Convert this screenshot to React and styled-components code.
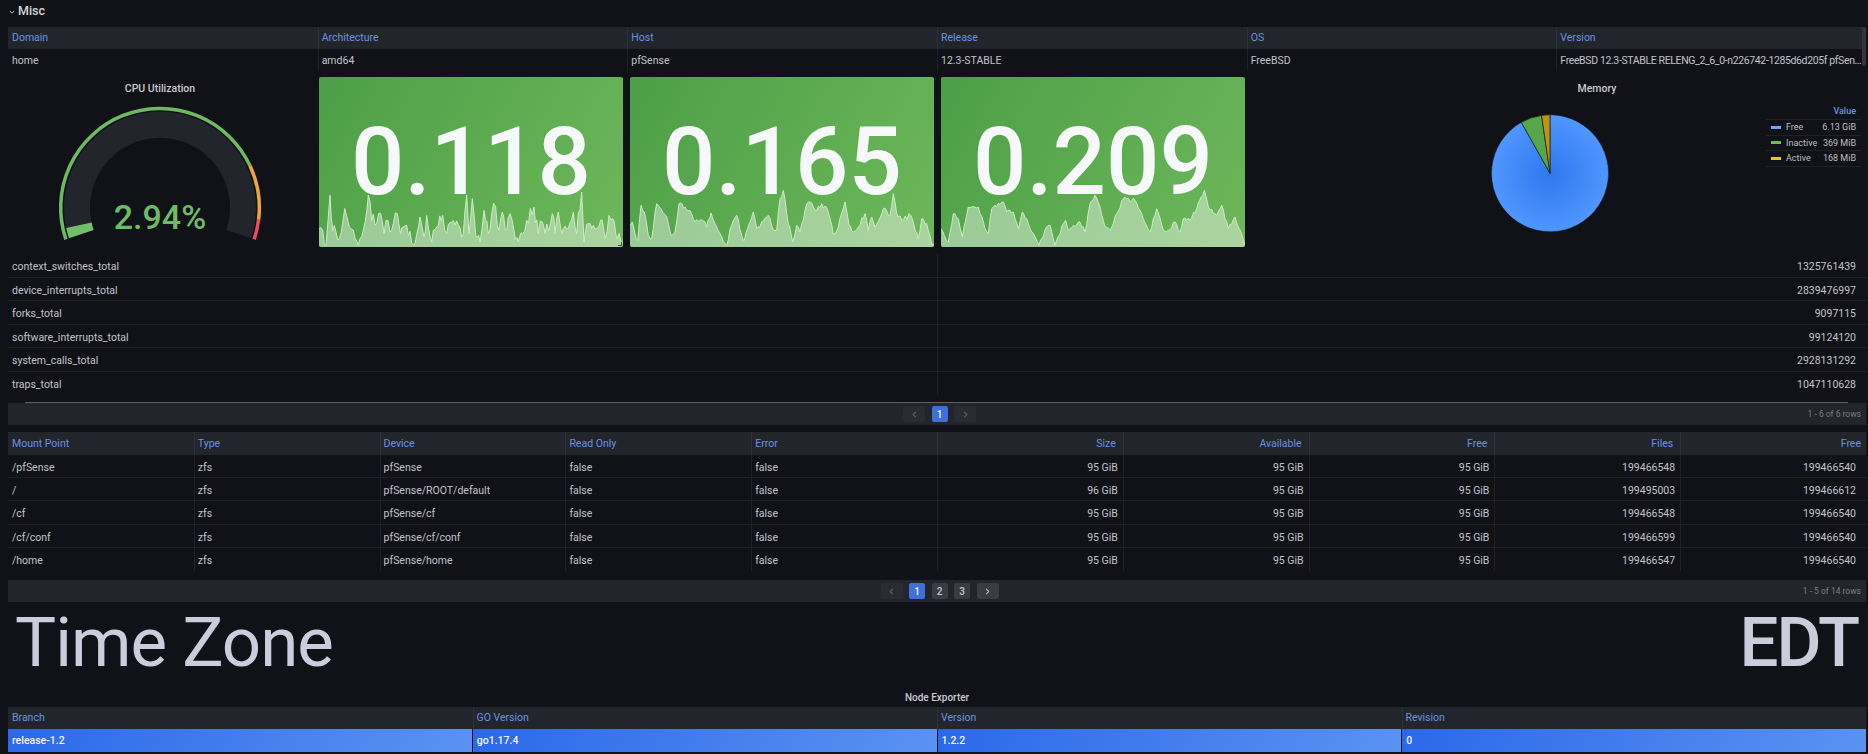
import React from 'react';
import styled, { createGlobalStyle } from 'styled-components';

const Global = createGlobalStyle`
  html, body { margin: 0; padding: 0; background: #111217; overflow: hidden; }
  body { font-family: Roboto, "Liberation Sans", sans-serif; font-size: 11px; color: #c4c4d0; }
`;

const Page = styled.div`
  width: 1868px;
  height: 754px;
  box-sizing: border-box;
  padding: 0 2px 0 8px;
  overflow: hidden;
`;

const RowHeader = styled.div`
  height: 27px;
  margin-left: -8px;
  padding-left: 9px;
  box-sizing: border-box;
  display: flex;
  align-items: flex-start;
  padding-top: 3px;
  gap: 3px;
  font-size: 12.5px;
  font-weight: 500;
  line-height: 15px;
  color: #d4d5dc;
  svg { margin-top: 6px; }
`;

const Table = styled.div`
  position: relative;
  width: 100%;
`;

const Grid = styled.div`
  display: grid;
  grid-template-columns: repeat(${p => p.$cols}, 1fr);
`;

const HeadRow = styled(Grid)`
  height: ${p => p.$h || 22}px;
  margin-top: ${p => p.$mt || 0}px;
  background: #22252b;
`;

const HeadCell = styled.div`
  padding: 0 ${p => p.$end ? 7 : 4}px 0 ${p => p.$first ? 4 : 3}px;
  line-height: ${p => p.$lh || 22}px;
  color: #6a92e4;
  font-size: 10.5px;
  text-align: ${p => p.$end ? 'right' : 'left'};
  border-left: ${p => p.$first ? 0 : 1}px solid #2d3036;
  white-space: nowrap;
  overflow: hidden;
  &:last-child { padding-right: ${p => p.$end ? 5 : 4}px; }
`;

const BodyRow = styled(Grid)`
  height: ${p => p.$h}px;
  box-sizing: border-box;
  border-bottom: ${p => p.$line ? '1px solid #1f2126' : '0'};
`;

const BodyCell = styled.div`
  padding: 0 ${p => p.$last ? 10 : 5}px 0 ${p => p.$first ? 4 : 3}px;
  line-height: ${p => p.$h + 2}px;
  font-size: 10.5px;
  letter-spacing: ${p => p.$tight ? '-0.37px' : 'normal'};
  color: #c2c2cd;
  text-align: ${p => p.$end ? 'right' : 'left'};
  border-left: ${p => p.$first ? 0 : 1}px solid #1f2126;
  white-space: nowrap;
  overflow: hidden;
`;

const VScroll = styled.div`
  position: absolute;
  right: 0;
  top: 0;
  width: 4px;
  height: 39px;
  background: #33353b;
  border-radius: 2px;
`;

const Panels = styled.div`
  display: flex;
  gap: 7px;
  height: 170px;
  margin-top: 6px;
`;

const Panel = styled.div`
  position: relative;
  flex: ${p => p.$grow ? '1 1 0' : '0 0 304px'};
  display: flex;
  flex-direction: column;
`;

const PanelTitle = styled.div`
  height: 24px;
  line-height: 24px;
  text-align: center;
  font-size: 10.5px;
  font-weight: 500;
  color: #c9c9d3;
  padding-left: ${p => p.$shift || 0}px;
`;

const StatCard = styled.div`
  position: relative;
  flex: 0 0 304px;
  height: 170px;
  border-radius: 2px;
  overflow: hidden;
  background: linear-gradient(120deg, #4c9f47, #6eb75a);
  display: flex;
  align-items: center;
  justify-content: center;
`;

const StatValue = styled.div`
  position: relative;
  z-index: 1;
  font-size: 94px;
  font-weight: 500;
  line-height: 1;
  color: #f7f8fa;
  margin-top: -1px;
`;

const Spark = styled.svg`
  position: absolute;
  left: 0;
  bottom: 0;
  z-index: 2;
`;

const Resize = styled.div`
  position: absolute;
  z-index: 3;
  right: 1px;
  bottom: 1px;
  width: 3px;
  height: 3px;
  border-right: 1px solid #3c5a3c;
  border-bottom: 1px solid #3c5a3c;
`;

const PieBody = styled.div`
  display: flex;
  flex: 1;
  justify-content: space-between;
  align-items: flex-start;
`;

const Legend = styled.div`
  width: 95px;
  margin: 2px 5px 0 0;
  font-size: 9px;
  color: #bdbdc8;
`;

const LegendHead = styled.div`
  height: 16px;
  line-height: 16px;
  padding-right: 5px;
  text-align: right;
  color: #6a92e4;
  font-weight: 500;
  border-bottom: 1px solid #1f2126;
`;

const LegendRow = styled.div`
  display: flex;
  align-items: center;
  height: 15.6px;
  box-sizing: border-box;
  padding: 0 5px;
  border-bottom: 1px solid #1f2126;
`;

const Swatch = styled.span`
  width: 10px;
  height: 3px;
  margin-right: 5px;
  background: ${p => p.$color};
`;

const LegendValue = styled.span`
  margin-left: auto;
`;

const Rows = styled.div`
  position: relative;
  height: ${p => p.$h}px;
  margin-top: ${p => p.$mt || 0}px;
`;

const HScroll = styled.div`
  position: absolute;
  left: 17px;
  right: 18px;
  bottom: 0;
  height: 1px;
  background: #5e6065;
`;

const Footer = styled.div`
  position: relative;
  height: 22px;
  box-sizing: border-box;
  padding-left: 5px;
  background: #22252b;
  display: flex;
  align-items: center;
  justify-content: center;
  gap: 6.5px;
`;

const PageBtn = styled.div`
  width: ${p => p.$wide ? 22 : 16}px;
  height: 16px;
  border-radius: 2px;
  display: flex;
  align-items: center;
  justify-content: center;
  font-size: 10px;
  font-weight: 500;
  color: ${p => p.$active ? '#f4f5f8' : p.$muted ? '#64666c' : '#c4c4cc'};
  background: ${p => p.$active ? '#3d71d9' : p.$muted ? '#2a2c33' : '#3a3c42'};
`;

const FooterNote = styled.div`
  position: absolute;
  right: 5px;
  top: 0;
  line-height: 22px;
  font-size: 8.5px;
  color: #7d7e84;
`;

const TimeRow = styled.div`
  height: 85px;
  display: flex;
  justify-content: space-between;
  align-items: flex-start;
  padding: 0 8px 0 7px;
  font-size: 69px;
  line-height: 81px;
  color: #ccccdc;
`;

const TimeLabel = styled.div`
  font-weight: 400;
  letter-spacing: -1px;
`;

const TimeValue = styled.div`
  font-weight: 500;
  letter-spacing: -2px;
`;

const NodeTitle = styled.div`
  height: 20px;
  line-height: 21px;
  text-align: center;
  font-size: 10px;
  font-weight: 500;
  color: #c9c9d3;
`;

const BlueRow = styled(Grid)`
  height: 23px;
  gap: 1px;
`;

const BlueCell = styled.div`
  padding-left: 4px;
  line-height: 23px;
  font-size: 10.5px;
  font-weight: 500;
  color: #f4f6fb;
  background: linear-gradient(120deg, #2b68e8, #5a93f2);
`;

const Px = [
  [[27,175],[38,180],[48,225],[60,75],[68,180],[78,185],[88,205],[100,145],[108,130],[118,170],[130,180],[145,225],[160,180],[175,75],[185,150],[200,160],[212,130],[222,190],[228,150],[240,185],[250,160],[262,130],[272,190],[280,170],[295,195],[315,220],[330,140],[342,200],[350,135],[365,215],[385,165],[398,135],[410,190],[425,155],[445,165],[460,190],[470,75],[477,190],[487,85],[497,195],[510,215],[522,120],[535,190],[545,130],[557,110],[567,180],[577,125],[590,180],[600,130],[612,180],[625,215],[638,190],[650,150],[672,110],[685,190],[697,155],[705,190],[727,130],[735,190],[745,125],[755,190],[770,175],[790,125],[800,190],[815,65],[822,215],[835,160],[850,165],[872,150],[885,205],[897,135],[908,145],[922,205],[938,215]],
  [[15,165],[22,155],[30,190],[38,210],[48,105],[58,125],[70,195],[80,205],[95,100],[108,115],[125,140],[138,195],[150,185],[162,100],[185,120],[200,130],[210,155],[232,150],[245,170],[258,128],[270,160],[285,190],[305,225],[320,165],[335,135],[350,195],[358,210],[385,125],[395,175],[430,135],[445,178],[455,180],[465,85],[475,60],[485,130],[503,215],[515,165],[525,185],[545,100],[560,98],[575,120],[590,100],[610,125],[625,190],[640,170],[660,95],[672,165],[685,185],[700,170],[720,130],[730,180],[740,140],[750,170],[775,115],[795,135],[805,70],[815,130],[830,150],[857,135],[880,205],[890,145],[905,160],[920,220],[927,225]],
  [[18,175],[28,195],[40,215],[55,130],[70,145],[82,200],[100,110],[130,110],[150,175],[160,190],[170,115],[205,95],[215,125],[235,125],[250,175],[262,125],[275,145],[290,185],[312,225],[335,170],[345,165],[360,225],[385,160],[392,150],[400,180],[435,155],[450,185],[465,100],[480,75],[495,110],[510,170],[525,180],[545,130],[565,85],[600,90],[625,145],[645,185],[665,115],[685,180],[700,180],[720,155],[735,185],[745,145],[765,150],[785,115],[808,60],[820,110],[845,135],[860,105],[880,175],[900,140],[930,225]],
];

function sparkPath(points, originPx, noise) {
  const out = [];
  let seed = 17;
  const next = () => {
    seed = (seed * 137 + 71) % 1009;
    return seed / 1009 - 0.5;
  };
  points.forEach((p, i) => {
    const n = points[i + 1];
    out.push([(p[0] - originPx) / 3, (p[1] - 230) / 3 + 60]);
    if (!n) return;
    const steps = Math.max(1, Math.round((n[0] - p[0]) / 5));
    for (let s = 1; s < steps; s++) {
      const t = s / steps;
      const x = p[0] + (n[0] - p[0]) * t;
      const y = Math.min(228, p[1] + (n[1] - p[1]) * t + next() * noise);
      out.push([(x - originPx) / 3, (y - 230) / 3 + 60]);
    }
  });
  return out;
}

function Sparkline({ points, origin, noise }) {
  const pts = sparkPath(points, origin, noise);
  const line = pts.map(p => p[0].toFixed(1) + ',' + p[1].toFixed(1)).join(' ');
  const area = `0,60 ${line} 304,60`;
  return (
    <Spark width="304" height="60" viewBox="0 0 304 60">
      <polygon points={area} fill="#ffffff" fillOpacity="0.42" />
      <polyline points={line} fill="none" stroke="#cdeac5" strokeWidth="1" />
    </Spark>
  );
}

const CX = 152;
const CY = 106.7;
function arc(r, from, to) {
  const p = d => {
    const a = (d * Math.PI) / 180;
    return [CX - r * Math.cos(a), CY - r * Math.sin(a)];
  };
  const [x1, y1] = p(from);
  const [x2, y2] = p(to);
  const large = to - from > 180 ? 1 : 0;
  return `M${x1.toFixed(2)} ${y1.toFixed(2)}A${r} ${r} 0 ${large} 1 ${x2.toFixed(2)} ${y2.toFixed(2)}`;
}

function Gauge() {
  return (
    <svg width="304" height="146" viewBox="0 0 304 146">
      <path d={arc(83, -18.6, 198.6)} fill="none" stroke="#22252b" strokeWidth="26" />
      <path d={arc(83, -18.6, -12.2)} fill="none" stroke="#73bf69" strokeWidth="26" />
      <path d={arc(99.3, -18.6, 155)} fill="none" stroke="#6fb965" strokeWidth="3.5" />
      <path d={arc(99.3, 155, 187)} fill="none" stroke="#eea63a" strokeWidth="3.5" />
      <path d={arc(99.3, 187, 198.6)} fill="none" stroke="#ee4a62" strokeWidth="3.5" />
      <text x={CX} y="128" textAnchor="middle" fontFamily="Roboto, sans-serif" fontSize="34" fontWeight="500" fill="#6fbb65">2.94%</text>
    </svg>
  );
}

function wedge(cx, cy, r, from, to) {
  const p = d => {
    const a = (d * Math.PI) / 180;
    return [cx + r * Math.sin(a), cy - r * Math.cos(a)];
  };
  const [x1, y1] = p(from);
  const [x2, y2] = p(to);
  const large = to - from > 180 ? 1 : 0;
  return `M${cx} ${cy}L${x1.toFixed(2)} ${y1.toFixed(2)}A${r} ${r} 0 ${large} 1 ${x2.toFixed(2)} ${y2.toFixed(2)}Z`;
}

function Pie() {
  const cx = 298, cy = 72.3, r = 58.5;
  return (
    <svg width="514" height="146" viewBox="0 0 514 146">
      <defs>
        <radialGradient id="pieBlue" gradientUnits="userSpaceOnUse" cx={cx} cy={cy} r={r}>
          <stop offset="0" stopColor="#2f78ee" />
          <stop offset="1" stopColor="#5096ff" />
        </radialGradient>
      </defs>
      <path d={wedge(cx, cy, r, 0, 330.6)} fill="url(#pieBlue)" stroke="#111217" strokeWidth="0.5" />
      <path d={wedge(cx, cy, r, 330.6, 351.7)} fill="#56a64b" stroke="#14301a" strokeWidth="0.8" />
      <path d={wedge(cx, cy, r, 351.7, 360)} fill="#bd9415" stroke="#2a2410" strokeWidth="0.8" />
    </svg>
  );
}

const Chevron = ({ size = 6, dir = 'down', color = 'currentColor' }) => (
  <svg width={size} height={size} viewBox="0 0 8 8">
    <path
      d={dir === 'down' ? 'M1 2.5 4 5.5 7 2.5' : dir === 'left' ? 'M5.5 1 2.5 4 5.5 7' : 'M2.5 1 5.5 4 2.5 7'}
      fill="none"
      stroke={color}
      strokeWidth="1.2"
    />
  </svg>
);

const info = [
  ['Domain', 'home'],
  ['Architecture', 'amd64'],
  ['Host', 'pfSense'],
  ['Release', '12.3-STABLE'],
  ['OS', 'FreeBSD'],
  ['Version', 'FreeBSD 12.3-STABLE RELENG_2_6_0-n226742-1285d6d205f pfSen…'],
];

const totals = [
  ['context_switches_total', '1325761439'],
  ['device_interrupts_total', '2839476997'],
  ['forks_total', '9097115'],
  ['software_interrupts_total', '99124120'],
  ['system_calls_total', '2928131292'],
  ['traps_total', '1047110628'],
];

const fsHead = ['Mount Point', 'Type', 'Device', 'Read Only', 'Error', 'Size', 'Available', 'Free', 'Files', 'Free'];
const fsRows = [
  ['/pfSense', 'zfs', 'pfSense', 'false', 'false', '95 GiB', '95 GiB', '95 GiB', '199466548', '199466540'],
  ['/', 'zfs', 'pfSense/ROOT/default', 'false', 'false', '96 GiB', '95 GiB', '95 GiB', '199495003', '199466612'],
  ['/cf', 'zfs', 'pfSense/cf', 'false', 'false', '95 GiB', '95 GiB', '95 GiB', '199466548', '199466540'],
  ['/cf/conf', 'zfs', 'pfSense/cf/conf', 'false', 'false', '95 GiB', '95 GiB', '95 GiB', '199466599', '199466540'],
  ['/home', 'zfs', 'pfSense/home', 'false', 'false', '95 GiB', '95 GiB', '95 GiB', '199466547', '199466540'],
];
const exporter = [
  ['Branch', 'release-1.2'],
  ['GO Version', 'go1.17.4'],
  ['Version', '1.2.2'],
  ['Revision', '0'],
];
const legend = [
  ['Free', '6.13 GiB', '#6ea6ff'],
  ['Inactive', '369 MiB', '#6fb965'],
  ['Active', '168 MiB', '#eac324'],
];

export default function App() {
  return (
    <Page>
      <Global />
      <RowHeader>
        <Chevron size={6} />
        Misc
      </RowHeader>

      <Table>
        <HeadRow $cols={6}>
          {info.map((c, i) => <HeadCell key={c[0]} $first={i === 0}>{c[0]}</HeadCell>)}
        </HeadRow>
        <BodyRow $cols={6} $h={22}>
          {info.map((c, i) => <BodyCell key={c[0]} $h={22} $first={i === 0} $tight={i === 5}>{c[1]}</BodyCell>)}
        </BodyRow>
        <VScroll />
      </Table>

      <Panels>
        <Panel>
          <PanelTitle>CPU Utilization</PanelTitle>
          <Gauge />
        </Panel>
        <StatCard>
          <StatValue>0.118</StatValue>
          <Sparkline points={Px[0]} origin={27} noise={46} />
          <Resize />
        </StatCard>
        <StatCard>
          <StatValue>0.165</StatValue>
          <Sparkline points={Px[1]} origin={15} noise={16} />
        </StatCard>
        <StatCard>
          <StatValue>0.209</StatValue>
          <Sparkline points={Px[2]} origin={18} noise={12} />
        </StatCard>
        <Panel $grow>
          <PanelTitle $shift={76}>Memory</PanelTitle>
          <PieBody>
            <Pie />
            <Legend>
              <LegendHead>Value</LegendHead>
              {legend.map(l => (
                <LegendRow key={l[0]}>
                  <Swatch $color={l[2]} />
                  {l[0]}
                  <LegendValue>{l[1]}</LegendValue>
                </LegendRow>
              ))}
            </Legend>
          </PieBody>
        </Panel>
      </Panels>

      <Table>
        <Rows $h={149} $mt={7}>
          {totals.map((r, i) => (
            <BodyRow key={r[0]} $cols={2} $h={23.5} $line={i < 5}>
              <BodyCell $h={23.5} $first>{r[0]}</BodyCell>
              <BodyCell $h={23.5} $end $last>{r[1]}</BodyCell>
            </BodyRow>
          ))}
          <HScroll />
        </Rows>
        <Footer>
          <PageBtn $wide $muted><Chevron size={7} dir="left" /></PageBtn>
          <PageBtn $active>1</PageBtn>
          <PageBtn $wide $muted><Chevron size={7} dir="right" /></PageBtn>
          <FooterNote>1 - 6 of 6 rows</FooterNote>
        </Footer>
      </Table>

      <Table>
        <HeadRow $cols={10} $h={22.5} $mt={7}>
          {fsHead.map((h, i) => <HeadCell key={i} $first={i === 0} $end={i > 4} $lh={23}>{h}</HeadCell>)}
        </HeadRow>
        <Rows $h={125.5}>
          {fsRows.map((r, i) => (
            <BodyRow key={i} $cols={10} $h={23.4} $line={i < 4}>
              {r.map((c, j) => (
                <BodyCell key={j} $h={23.4} $first={j === 0} $end={j > 4} $last={j === 9}>{c}</BodyCell>
              ))}
            </BodyRow>
          ))}
        </Rows>
        <Footer>
          <PageBtn $wide $muted><Chevron size={7} dir="left" /></PageBtn>
          <PageBtn $active>1</PageBtn>
          <PageBtn>2</PageBtn>
          <PageBtn>3</PageBtn>
          <PageBtn $wide><Chevron size={7} dir="right" /></PageBtn>
          <FooterNote>1 - 5 of 14 rows</FooterNote>
        </Footer>
      </Table>

      <TimeRow>
        <TimeLabel>Time Zone</TimeLabel>
        <TimeValue>EDT</TimeValue>
      </TimeRow>

      <NodeTitle>Node Exporter</NodeTitle>
      <Table>
        <HeadRow $cols={4}>
          {exporter.map((c, i) => <HeadCell key={c[0]} $first={i === 0}>{c[0]}</HeadCell>)}
        </HeadRow>
        <BlueRow $cols={4}>
          {exporter.map(c => <BlueCell key={c[0]}>{c[1]}</BlueCell>)}
        </BlueRow>
      </Table>
    </Page>
  );
}
